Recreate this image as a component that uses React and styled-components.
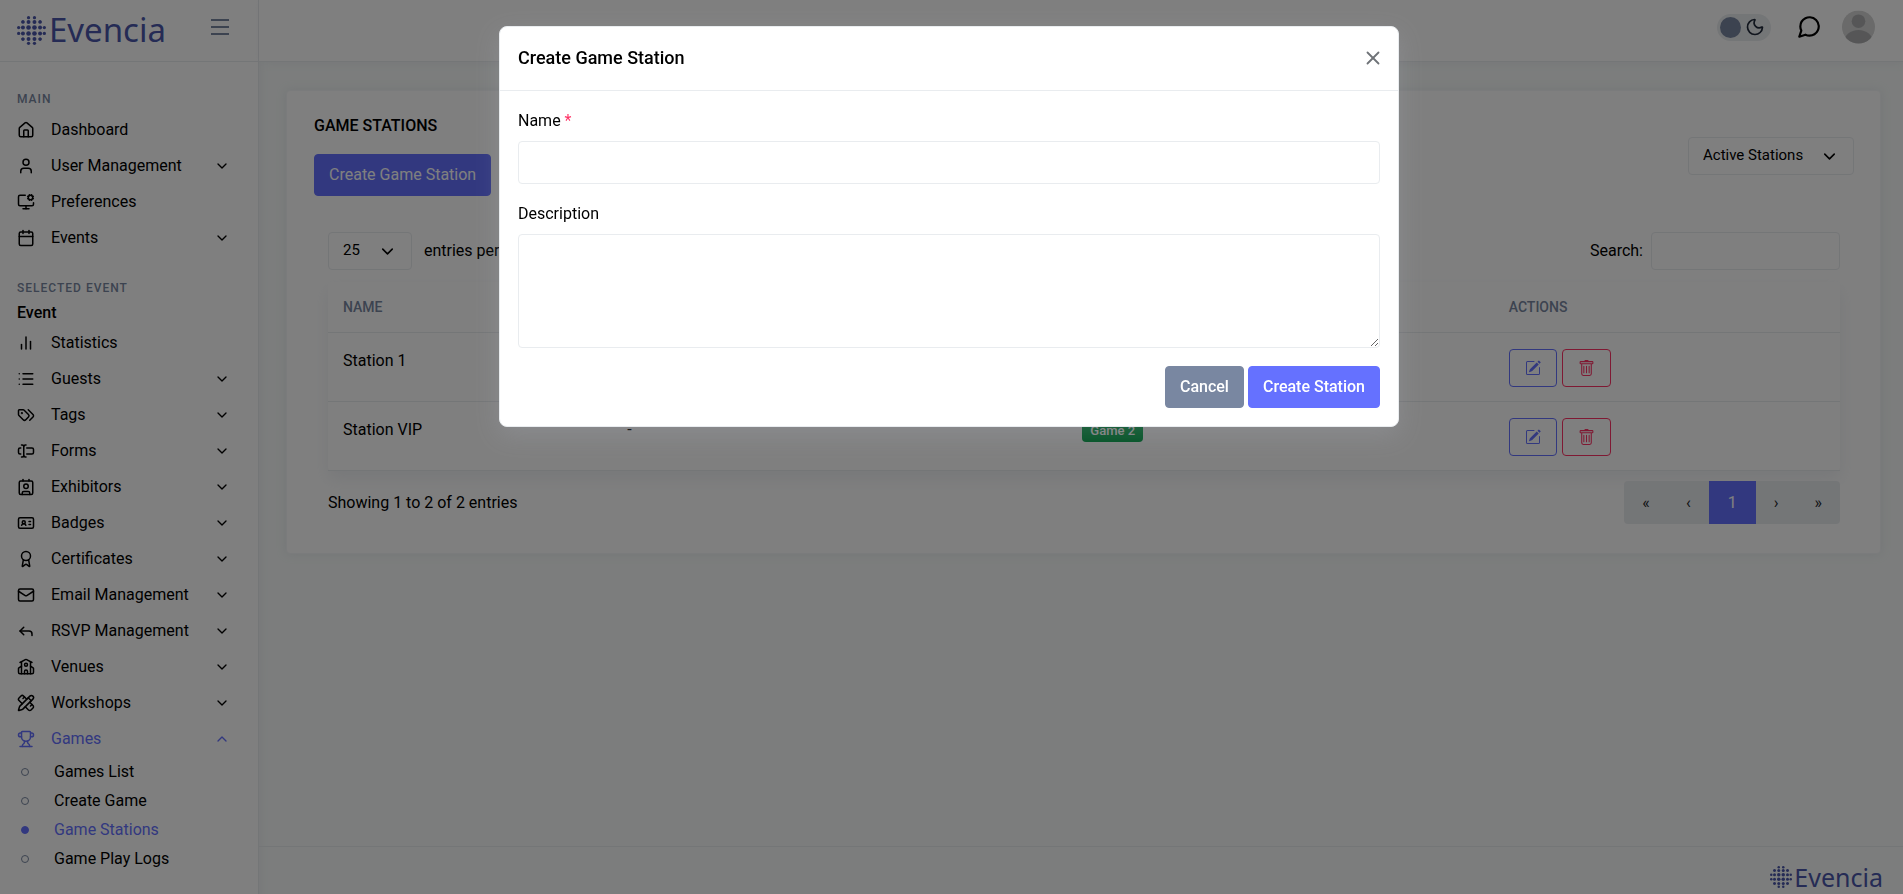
import { useState } from "react";
import styled, { createGlobalStyle } from "styled-components";
import {
	Award,
	Calendar,
	Contact,
	House,
	IdCard,
	List,
	Mail,
	MonitorCog,
	Moon,
	PencilRuler,
	Reply,
	School,
	TextCursorInput,
	Trophy,
	User,
	X,
} from "lucide-react";
import {
	FiBarChart2,
	FiChevronDown,
	FiChevronUp,
	FiMessageCircle,
} from "react-icons/fi";
import { BsPencilSquare, BsTrash } from "react-icons/bs";

const GlobalStyle = createGlobalStyle`
	:root {
		--primary: #6571ff;
		--secondary: #7987a1;
		--danger: #ff3366;
		--success: #05a34a;
		--border: #e9ecef;
		--body-bg: #f8fbfa;
		--logo: #4b57aa;
	}

	* {
		box-sizing: border-box;
	}

	body {
		margin: 0;
		background-color: var(--body-bg);
		color: #000;
		font-family: Roboto, "Liberation Sans", sans-serif;
		font-size: 16px;
		line-height: 24px;
	}

	button,
	input,
	select,
	textarea {
		font: inherit;
		color: inherit;
	}

	a {
		color: inherit;
		text-decoration: none;
	}
`;

const Layout = styled.div`
	display: flex;
	min-height: 100vh;
`;

const Sidebar = styled.aside`
	width: 259px;
	flex-shrink: 0;
	background-color: #fff;
	border-right: 1px solid var(--border);
	box-shadow: 0 8px 10px 0 rgba(183, 192, 206, 0.2);
`;

const SidebarHeader = styled.div`
	display: flex;
	justify-content: space-between;
	align-items: flex-start;
	height: 62px;
	padding: 8px 29px 0 17px;
	border-bottom: 1px solid var(--border);
`;

const Brand = styled.a`
	display: flex;
	align-items: center;
	gap: ${({ $small }) => ($small ? "2px" : "3px")};
	color: var(--logo);
	font-family: "Noto Sans", sans-serif;
	font-size: ${({ $small }) => ($small ? "25px" : "33px")};
	line-height: ${({ $small }) => ($small ? "34px" : "44px")};

	& > svg {
		width: ${({ $small }) => ($small ? "22px" : "29px")};
	}
`;

const MenuToggle = styled.button`
	display: flex;
	flex-direction: column;
	gap: 5px;
	width: 18px;
	margin-top: 11px;
	padding: 0;
	border: 0;
	background: none;
`;

const MenuLine = styled.span`
	width: 100%;
	height: 2px;
	background-color: var(--secondary);
`;

const SidebarBody = styled.nav`
	display: flex;
	flex-direction: column;
	gap: 22px;
	padding: 27px 28px 20px 17px;
`;

const Category = styled.h2`
	margin: 0 0 3px;
	font-size: 12px;
	line-height: 20px;
	font-weight: 500;
	letter-spacing: 1px;
	text-transform: uppercase;
	color: var(--secondary);
`;

const EventName = styled.p`
	margin: 0;
	font-weight: 500;
`;

const NavItem = styled.a`
	display: flex;
	align-items: center;
	height: 36px;
	color: ${({ $active }) => ($active ? "var(--primary)" : "#000")};

	& > svg:first-child {
		margin-right: 16px;
	}
`;

const NavLabel = styled.span`
	flex: 1;
`;

const SubItem = styled.a`
	display: flex;
	align-items: center;
	gap: 25px;
	height: 29px;
	padding-left: 4px;
	color: ${({ $active }) => ($active ? "var(--primary)" : "#000")};

	&::before {
		content: "";
		width: 6px;
		height: 6px;
		border: 1px solid ${({ $active }) => ($active ? "var(--primary)" : "var(--secondary)")};
		border-radius: 50%;
		background-color: ${({ $active }) => ($active ? "var(--primary)" : "transparent")};
	}
`;

const Page = styled.div`
	display: flex;
	flex: 1;
	flex-direction: column;
	min-width: 0;
`;

const Navbar = styled.header`
	display: flex;
	justify-content: flex-end;
	align-items: center;
	height: 62px;
	padding: 0 28px 7px;
	background-color: #fff;
	border-bottom: 1px solid var(--border);
	box-shadow: 3px 0 10px 0 rgba(183, 192, 206, 0.2);
`;

const ThemeSwitch = styled.button`
	display: flex;
	align-items: center;
	justify-content: space-between;
	width: 54px;
	height: 27px;
	padding: 0 6px 0 3px;
	border: 0;
	border-radius: 14px;
	background-color: var(--border);
	color: #212a3a;
`;

const Knob = styled.span`
	width: 21px;
	height: 21px;
	border-radius: 50%;
	background-color: var(--secondary);
`;

const IconButton = styled.button`
	display: flex;
	margin: 0 20px 0 25px;
	padding: 0;
	border: 0;
	background: none;
`;

const Content = styled.main`
	flex: 1;
	padding: 28px 22px 28px 27px;
`;

const Card = styled.section`
	padding: 25px 26px 29px 27px;
	border: 1px solid #f4f6f8;
	border-radius: 4px;
	background-color: #fff;
	box-shadow: 0 0 10px 0 rgba(183, 192, 206, 0.25);
`;

const CardHeader = styled.div`
	display: flex;
	justify-content: space-between;
	align-items: center;
`;

const CardTitle = styled.h1`
	margin: 0 0 18px;
	font-size: 16px;
	line-height: 20px;
	font-weight: 500;
	text-transform: uppercase;
`;

const Button = styled.button`
	height: 42px;
	padding: 0 14px;
	border: 1px solid var(--${({ $variant = "primary" }) => $variant});
	border-radius: 4px;
	background-color: var(--${({ $variant = "primary" }) => $variant});
	color: #fff;
	font-weight: ${({ $weight = 400 }) => $weight};
`;

const OutlineButton = styled.button`
	display: inline-flex;
	align-items: center;
	height: 38px;
	margin-right: 5px;
	padding: 0 15px;
	border: 1px solid var(--${({ $variant }) => $variant});
	border-radius: 4px;
	background: none;
	color: var(--${({ $variant }) => $variant});
	vertical-align: top;
`;

const SelectWrap = styled.span`
	display: inline-grid;
	align-items: center;
	width: ${({ $width }) => $width};

	& > * {
		grid-area: 1 / 1;
	}

	& > svg {
		justify-self: end;
		margin-right: 15px;
		pointer-events: none;
	}
`;

const Select = styled.select`
	width: 100%;
	height: 38px;
	padding: 0 14px 2px;
	border: 1px solid var(--border);
	border-radius: 4px;
	background-color: #fff;
	font-size: 15px;
	appearance: none;
`;

const TableArea = styled.div`
	margin: 36px 14px 0;
`;

const TableBar = styled.div`
	display: flex;
	justify-content: space-between;
	align-items: center;
`;

const BarLabel = styled.label`
	display: flex;
	align-items: center;
	gap: ${({ $gap }) => $gap};
`;

const Input = styled.input`
	width: ${({ $width = "100%" }) => $width};
	height: ${({ $height = "43px" }) => $height};
	padding: 0 14px;
	border: 1px solid var(--border);
	border-radius: 4px;
	background-color: #fff;
`;

const Table = styled.table`
	width: 100%;
	margin: 12px 0 10px;
	border-collapse: separate;
	border-spacing: 0;
	border-radius: 4px;
	table-layout: fixed;
	box-shadow: 0 8px 16px 0 rgba(150, 160, 180, 0.15);
`;

const HeadCell = styled.th`
	width: ${({ $width }) => $width};
	height: 51px;
	padding: 0 15px;
	border-bottom: 1px solid var(--border);
	color: var(--secondary);
	font-size: 14px;
	font-weight: 500;
	text-align: left;
	text-transform: uppercase;
`;

const Cell = styled.td`
	padding: 16px 15px 14px;
	border-bottom: 1px solid var(--border);
	vertical-align: top;
`;

const Badge = styled.span`
	display: inline-block;
	padding: 3px 8px;
	border-radius: 4px;
	background-color: var(--success);
	color: #fff;
	font-size: 13px;
	line-height: 17px;
	font-weight: 500;
`;

const Pagination = styled.nav`
	display: flex;
	overflow: hidden;
	border-radius: 4px;
	background-color: var(--border);
`;

const PageButton = styled.button`
	height: 43px;
	padding: 0 ${({ $active }) => ($active ? "19px" : "18px")};
	border: 0;
	background-color: ${({ $active }) => ($active ? "var(--primary)" : "transparent")};
	color: ${({ $active }) => ($active ? "#fff" : "#212529")};
`;

const Footer = styled.footer`
	display: flex;
	justify-content: flex-end;
	align-items: flex-start;
	height: 48px;
	padding: 13px 20px 0;
	border-top: 1px solid var(--border);
`;

const Backdrop = styled.div`
	position: fixed;
	inset: 0;
	display: flex;
	justify-content: center;
	align-items: flex-start;
	padding: 26px 5px 26px 0;
	background-color: rgba(0, 0, 0, 0.5);
`;

const Modal = styled.div`
	width: 100%;
	max-width: 900px;
	border: 1px solid var(--border);
	border-radius: 8px;
	background-color: #fff;
	box-shadow: 0 8px 25px 0 rgba(183, 192, 206, 0.2);
`;

const ModalHeader = styled.div`
	display: flex;
	justify-content: space-between;
	align-items: center;
	height: 64px;
	padding: 0 14px 1px 18px;
	border-bottom: 1px solid var(--border);
`;

const ModalTitle = styled.h2`
	margin: 0;
	font-size: 18px;
	font-weight: 500;
`;

const CloseButton = styled.button`
	display: flex;
	padding: 0;
	border: 0;
	background: none;
	color: #6f7378;
`;

const ModalForm = styled.form`
	padding: 18px;
`;

const Field = styled.div`
	margin-bottom: 18px;
`;

const FieldLabel = styled.label`
	display: block;
	margin-bottom: 8px;
`;

const Required = styled.span`
	color: var(--danger);
`;

const TextArea = styled.textarea`
	display: block;
	width: 100%;
	height: 114px;
	padding: 9px 14px;
	border: 1px solid var(--border);
	border-radius: 4px;
	resize: vertical;
`;

const ModalActions = styled.div`
	display: flex;
	justify-content: flex-end;
	gap: 4px;
`;

function TagsIcon({ size, strokeWidth }) {
	return (
		<svg
			width={size}
			height={size}
			viewBox="0 0 24 24"
			fill="none"
			stroke="currentColor"
			strokeWidth={strokeWidth}
			strokeLinecap="round"
			strokeLinejoin="round"
		>
			<path d="m15 5 6.3 6.3a2.4 2.4 0 0 1 0 3.4L17 19" />
			<path d="M9.586 5.586A2 2 0 0 0 8.172 5H3a1 1 0 0 0-1 1v5.172a2 2 0 0 0 .586 1.414L8.29 18.29a2.426 2.426 0 0 0 3.42 0l3.58-3.58a2.426 2.426 0 0 0 0-3.42z" />
			<circle cx="6.5" cy="9.5" r=".5" fill="currentColor" />
		</svg>
	);
}

const mainLinks = [
	{ label: "Dashboard", icon: House },
	{ label: "User Management", icon: User, expandable: true },
	{ label: "Preferences", icon: MonitorCog },
	{ label: "Events", icon: Calendar, expandable: true },
];

const eventLinks = [
	{ label: "Statistics", icon: FiBarChart2 },
	{ label: "Guests", icon: List, expandable: true },
	{ label: "Tags", icon: TagsIcon, expandable: true },
	{ label: "Forms", icon: TextCursorInput, expandable: true },
	{ label: "Exhibitors", icon: Contact, expandable: true },
	{ label: "Badges", icon: IdCard, expandable: true },
	{ label: "Certificates", icon: Award, expandable: true },
	{ label: "Email Management", icon: Mail, expandable: true },
	{ label: "RSVP Management", icon: Reply, expandable: true },
	{ label: "Venues", icon: School, expandable: true },
	{ label: "Workshops", icon: PencilRuler, expandable: true },
	{ label: "Games", icon: Trophy, expandable: true, active: true },
];

const gameLinks = ["Games List", "Create Game", "Game Stations", "Game Play Logs"];

const stations = [
	{ name: "Station 1", description: "-", game: "Game 1" },
	{ name: "Station VIP", description: "-", game: "Game 2" },
];

const dotPositions = [5, 18, 35, 53, 70, 83];

function Logo({ small }) {
	const dots = [];
	dotPositions.forEach((x, col) => {
		dotPositions.forEach((y, row) => {
			const ring = Math.abs(col - 2.5) + Math.abs(row - 2.5);
			if (ring > 3) return;
			const r = ring < 2 ? 7 : ring < 3 && col % 5 && row % 5 ? 6 : 5;
			dots.push(<circle key={`${x}-${y}`} cx={x} cy={y} r={r} />);
		});
	});
	[18, 70].forEach((x) =>
		[18, 70].forEach((y) => {
			dots.push(<circle key={`corner-${x}-${y}`} cx={x} cy={y} r={5} />);
		})
	);

	return (
		<Brand href="#" $small={small}>
			<svg viewBox="0 0 88 88" fill="currentColor" aria-hidden="true">
				{dots}
			</svg>
			Evencia
		</Brand>
	);
}

function NavLinks({ links }) {
	return links.map(({ label, icon: Icon, expandable, active }) => (
		<NavItem key={label} href="#" $active={active}>
			<Icon size={18} strokeWidth={2} />
			<NavLabel>{label}</NavLabel>
			{expandable && (active ? <FiChevronUp size={16} /> : <FiChevronDown size={16} />)}
		</NavItem>
	));
}

function Avatar() {
	return (
		<svg width="33" height="34" viewBox="0 0 34 34" role="img" aria-label="Profile">
			<clipPath id="avatar-clip">
				<circle cx="17" cy="17" r="17" />
			</clipPath>
			<g clipPath="url(#avatar-clip)">
				<rect width="34" height="34" fill="#d4d4d4" />
				<circle cx="17" cy="11" r="7" fill="#acadaf" />
				<ellipse cx="17" cy="33" rx="15" ry="13" fill="#acadaf" />
			</g>
		</svg>
	);
}

function StationsTable() {
	return (
		<Table>
			<thead>
				<tr>
					<HeadCell $width="18.8%">Name</HeadCell>
					<HeadCell $width="30.1%">Description</HeadCell>
					<HeadCell $width="28.2%">Games</HeadCell>
					<HeadCell>Actions</HeadCell>
				</tr>
			</thead>
			<tbody>
				{stations.map(({ name, description, game }) => (
					<tr key={name}>
						<Cell>{name}</Cell>
						<Cell>{description}</Cell>
						<Cell>
							<Badge>{game}</Badge>
						</Cell>
						<Cell>
							<OutlineButton $variant="primary" aria-label={`Edit ${name}`}>
								<BsPencilSquare size={16} />
							</OutlineButton>
							<OutlineButton $variant="danger" aria-label={`Delete ${name}`}>
								<BsTrash size={17} />
							</OutlineButton>
						</Cell>
					</tr>
				))}
			</tbody>
		</Table>
	);
}

function CreateStationModal({ onClose }) {
	return (
		<Backdrop>
			<Modal role="dialog" aria-modal="true" aria-labelledby="modal-title">
				<ModalHeader>
					<ModalTitle id="modal-title">Create Game Station</ModalTitle>
					<CloseButton aria-label="Close" onClick={onClose}>
						<X size={22} strokeWidth={2} />
					</CloseButton>
				</ModalHeader>
				<ModalForm onSubmit={(e) => e.preventDefault()}>
					<Field>
						<FieldLabel htmlFor="station-name">
							Name <Required>*</Required>
						</FieldLabel>
						<Input id="station-name" type="text" />
					</Field>
					<Field>
						<FieldLabel htmlFor="station-description">Description</FieldLabel>
						<TextArea id="station-description" />
					</Field>
					<ModalActions>
						<Button type="button" $variant="secondary" $weight={500} onClick={onClose}>
							Cancel
						</Button>
						<Button type="submit" $weight={500}>
							Create Station
						</Button>
					</ModalActions>
				</ModalForm>
			</Modal>
		</Backdrop>
	);
}

export default function App() {
	const [open, setOpen] = useState(true);

	return (
		<>
			<GlobalStyle />
			<Layout>
				<Sidebar>
					<SidebarHeader>
						<Logo />
						<MenuToggle aria-label="Toggle menu">
							<MenuLine />
							<MenuLine />
							<MenuLine />
						</MenuToggle>
					</SidebarHeader>
					<SidebarBody>
						<div>
							<Category>Main</Category>
							<NavLinks links={mainLinks} />
						</div>
						<div>
							<Category>Selected Event</Category>
							<EventName>Event</EventName>
							<NavLinks links={eventLinks} />
							{gameLinks.map((label) => (
								<SubItem key={label} href="#" $active={label === "Game Stations"}>
									{label}
								</SubItem>
							))}
						</div>
					</SidebarBody>
				</Sidebar>
				<Page>
					<Navbar>
						<ThemeSwitch aria-label="Toggle dark mode">
							<Knob />
							<Moon size={20} strokeWidth={2} />
						</ThemeSwitch>
						<IconButton aria-label="Messages">
							<FiMessageCircle size={26} />
						</IconButton>
						<Avatar />
					</Navbar>
					<Content>
						<Card>
							<CardHeader>
								<div>
									<CardTitle>Game Stations</CardTitle>
									<Button onClick={() => setOpen(true)}>Create Game Station</Button>
								</div>
								<SelectWrap $width="166px">
									<Select aria-label="Station status">
										<option>Active Stations</option>
									</Select>
									<FiChevronDown size={19} />
								</SelectWrap>
							</CardHeader>
							<TableArea>
								<TableBar>
									<BarLabel $gap="12px">
										<SelectWrap $width="84px">
											<Select>
												<option>25</option>
											</Select>
											<FiChevronDown size={19} />
										</SelectWrap>
										entries per page
									</BarLabel>
									<BarLabel $gap="8px">
										Search:
										<Input type="search" $width="189px" $height="38px" />
									</BarLabel>
								</TableBar>
								<StationsTable />
								<TableBar>
									<span>Showing 1 to 2 of 2 entries</span>
									<Pagination aria-label="Table pages">
										<PageButton>«</PageButton>
										<PageButton>‹</PageButton>
										<PageButton $active>1</PageButton>
										<PageButton>›</PageButton>
										<PageButton>»</PageButton>
									</Pagination>
								</TableBar>
							</TableArea>
						</Card>
					</Content>
					<Footer>
						<Logo small />
					</Footer>
				</Page>
			</Layout>
			{open && <CreateStationModal onClose={() => setOpen(false)} />}
		</>
	);
}
